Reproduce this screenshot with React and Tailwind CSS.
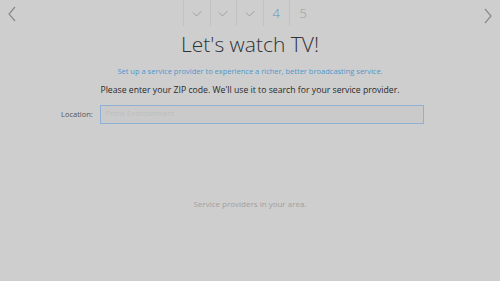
export default function App() {
    const steps = ['check', 'check', 'check', '4', '5'];

    return (
        <div className="w-[500px] h-[281px] bg-[#cecece] overflow-hidden flex flex-col" style={{ fontFamily: '"Open Sans", "Liberation Sans", sans-serif' }}>
            {/* top step bar */}
            <div className="h-[26px] flex items-center justify-between px-[7px]">
                <svg width="10" height="16" viewBox="0 0 10 16" className="mt-[2px]">
                    <path d="M8 1 L2 8 L8 15" fill="none" stroke="#8a8a8a" strokeWidth="1.2" />
                </svg>
                <div className="flex h-full border-l border-[#c2c2c2] ml-[166px]">
                    {steps.map((s, i) => (
                        <div key={i} className={`w-[26.5px] h-full flex items-center justify-center ${i < 4 ? 'border-r border-[#c2c2c2]' : ''}`}>
                            {s === 'check' ? (
                                <svg width="10" height="7" viewBox="0 0 10 7">
                                    <path d="M1 2.5 L4.5 6 L9.5 1" fill="none" stroke="#9a9a9a" strokeWidth="0.9" />
                                </svg>
                            ) : (
                                <span className={`text-[13px] font-light leading-none ${s === '4' ? 'text-[#5e95c4]' : 'text-[#9a9a9a]'}`}>{s}</span>
                            )}
                        </div>
                    ))}
                </div>
                <div className="flex-1" />
                <svg width="10" height="16" viewBox="0 0 10 16" className="mt-[6px]">
                    <path d="M2 1 L8 8 L2 15" fill="none" stroke="#8a8a8a" strokeWidth="1.2" />
                </svg>
            </div>

            {/* heading */}
            <div className="flex flex-col items-center mt-[3px]">
                <h1 className="text-[21px] font-light text-[#2f3238] leading-[30px]">Let's watch TV!</h1>
                <p className="text-[7.5px] text-[#4d97cd] mt-[7px] leading-[11px]">Set up a service provider to experience a richer, better broadcasting service.</p>
                <p className="text-[8.7px] text-[#2a2a2a] mt-[7px] leading-[12px]">Please enter your ZIP code. We'll use it to search for your service provider.</p>
            </div>

            {/* location input */}
            <div className="flex items-center mt-[9px] ml-[61px]">
                <span className="text-[7.5px] text-[#555] w-[39px]">Location:</span>
                <div className="w-[324px] h-[19px] border border-[#8fb0d4] bg-[#cacaca] flex items-center px-[5px]">
                    <span className="text-[7px] text-[#bdbdbd]">Prime Entertainment</span>
                </div>
            </div>

            {/* providers */}
            <div className="flex justify-center mt-[74px]">
                <span className="text-[8px] text-[#a0a0a0]">Service providers in your area.</span>
            </div>
        </div>
    );
}
